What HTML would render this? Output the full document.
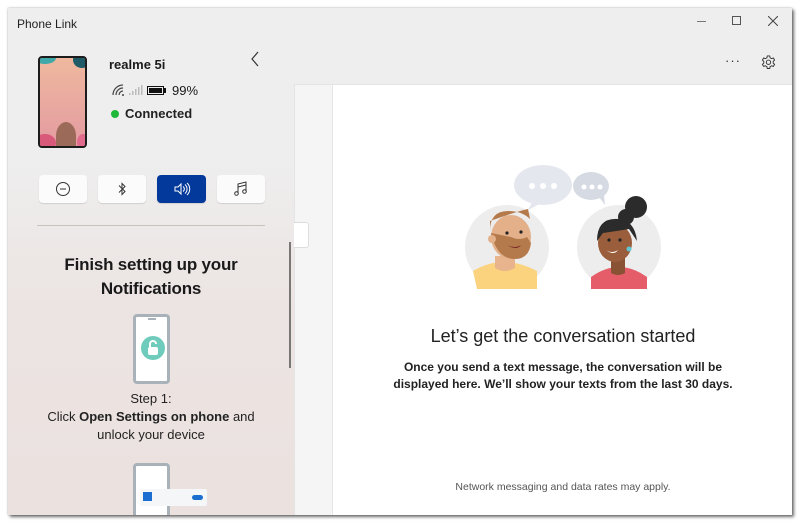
<!DOCTYPE html>
<html><head><meta charset="utf-8"><style>
*{margin:0;padding:0;box-sizing:border-box}
body{width:800px;height:524px;background:#fff;position:relative;overflow:hidden;font-family:"Liberation Sans",sans-serif;color:#1a1a1a}
.win{position:absolute;left:8px;top:8px;width:784px;height:507px;background:#eeeeee;box-shadow:2px 2px 3px rgba(0,0,0,.55),0 0 2px rgba(0,0,0,.3);overflow:hidden}
.left{position:absolute;left:0;top:0;width:286px;height:507px;background:linear-gradient(#eeeeee 0,#eeeeee 150px,#ece4e2 300px,#ebe2e0 507px)}
.mid{position:absolute;left:286px;top:76px;width:38px;height:431px;background:#f5f5f5;border-left:1px solid #e4e4e4;border-top:1px solid #e4e4e4}
.right{position:absolute;left:324px;top:76px;width:460px;height:431px;background:#fff;border-left:1px solid #e6e6e6;border-top:1px solid #e4e4e4}
.t{position:absolute;white-space:nowrap}
.btn{position:absolute;top:167px;width:48px;height:28px;background:#fbfbfb;border-radius:4px;box-shadow:0 1px 1px rgba(0,0,0,.12)}
.btn svg{position:absolute;left:16px;top:6px}
</style></head><body>
<div class="win">
<div class="left">
 <div class="t" style="left:9px;top:9px;font-size:12px;color:#222">Phone Link</div>
 <div style="position:absolute;left:30px;top:48px;width:49px;height:92px;border:2px solid #1c1c1c;border-radius:4px;overflow:hidden;background:linear-gradient(#efb89e,#e8a7a0 60%,#e39aa0)">
  <div style="position:absolute;left:-6px;top:-6px;width:22px;height:12px;border-radius:50%;background:#3fa8a8"></div>
  <div style="position:absolute;right:-6px;top:-6px;width:18px;height:16px;border-radius:50%;background:#1e5b66"></div>
  <div style="position:absolute;left:-6px;bottom:-6px;width:22px;height:18px;border-radius:50%;background:#d9597a"></div>
  <div style="position:absolute;left:16px;bottom:-4px;width:20px;height:28px;border-radius:50% 50% 10% 10%;background:#9c6a58"></div>
  <div style="position:absolute;right:-4px;bottom:-4px;width:12px;height:16px;border-radius:50%;background:#e16b8d"></div>
 </div>
 <div class="t" style="left:101px;top:49px;font-size:13px;font-weight:bold">realme 5i</div>
 <svg style="position:absolute;left:104px;top:76px" width="48" height="12" viewBox="0 0 48 12">
  <path d="M1 11a10 10 0 0 1 10-10M4 11a7 7 0 0 1 7-7M7 11a4 4 0 0 1 4-4" stroke="#444" stroke-width="1.2" fill="none"/><circle cx="11" cy="11" r="1" fill="#444"/>
  <g fill="#bbb"><rect x="17" y="9" width="1.5" height="2"/><rect x="20" y="7" width="1.5" height="4"/><rect x="23" y="5" width="1.5" height="6"/><rect x="26" y="3" width="1.5" height="8"/><rect x="29" y="1" width="1.5" height="10"/></g>
 </svg>
 <div style="position:absolute;left:139px;top:78px;width:17px;height:9px;border:1.5px solid #111;padding:1px"><div style="width:100%;height:100%;background:#111"></div></div>
 <div style="position:absolute;left:156px;top:80px;width:2px;height:5px;background:#111"></div>
 <div class="t" style="left:164px;top:75px;font-size:13px">99%</div>
 <div style="position:absolute;left:103px;top:102px;width:8px;height:8px;border-radius:50%;background:#1fb83a"></div>
 <div class="t" style="left:117px;top:98px;font-size:13px;font-weight:bold;color:#222">Connected</div>
 <svg style="position:absolute;left:242px;top:43px" width="10" height="16"><path d="M8 1L2 8l6 7" stroke="#333" stroke-width="1.2" fill="none"/></svg>
 <div class="btn" style="left:31px"><svg width="16" height="16"><circle cx="8" cy="8" r="6.5" stroke="#333" fill="none"/><path d="M5 8h6" stroke="#333"/></svg></div>
 <div class="btn" style="left:90px"><svg width="16" height="16"><path d="M5 4.5l6 6-3 3v-11l3 3-6 6" stroke="#333" fill="none"/></svg></div>
 <div class="btn" style="left:149px;background:#04399c;width:49px"><svg width="18" height="16"><path d="M2 6h3l3-3v10l-3-3H2z" stroke="#fff" fill="none"/><path d="M10 5.5a3 3 0 0 1 0 5M12 3.5a6 6 0 0 1 0 9M14 2a8 8 0 0 1 0 12" stroke="#fff" fill="none"/></svg></div>
 <div class="btn" style="left:209px"><svg width="16" height="16"><path d="M5 12V3l8-2v9" stroke="#333" fill="none"/><circle cx="3.5" cy="12.5" r="1.8" stroke="#333" fill="none"/><circle cx="11.5" cy="10.5" r="1.8" stroke="#333" fill="none"/><path d="M5 6l8-2" stroke="#333"/></svg></div>
 <div style="position:absolute;left:29px;top:217px;width:228px;height:1px;background:#c8c2c0"></div>
 <div style="position:absolute;left:281px;top:234px;width:2px;height:126px;background:#7a7676"></div>
 <div class="t" style="left:0;width:286px;text-align:center;top:245px;font-size:17px;line-height:24px;font-weight:bold;color:#1a1a1a;letter-spacing:-0.2px">Finish setting up your<br>Notifications</div>
 <div style="position:absolute;left:125px;top:306px;width:37px;height:70px;border:3px solid #a8b2b8;border-radius:4px;background:#fff">
  <div style="position:absolute;left:12px;top:1px;width:8px;height:2px;background:#a8b2b8"></div>
  <div style="position:absolute;left:5px;top:19px;width:24px;height:24px;border-radius:50%;background:#6fcbbb"></div>
  <svg style="position:absolute;left:5px;top:19px" width="24" height="24"><path d="M9 11V8a3 3 0 0 1 6 0" stroke="#fff" stroke-width="2" fill="none"/><rect x="7" y="11" width="10" height="8" rx="2" fill="#fff"/></svg>
 </div>
 <div class="t" style="left:0;width:286px;text-align:center;top:382px;font-size:13px;line-height:18px;color:#222">Step 1:<br>Click <b>Open Settings on phone</b> and<br>unlock your device</div>
 <div style="position:absolute;left:125px;top:455px;width:37px;height:60px;border:3px solid #a8b2b8;border-radius:4px;background:#fff"></div>
 <div style="position:absolute;left:132px;top:481px;width:67px;height:17px;background:#f4f6f8;border-radius:2px"></div>
 <div style="position:absolute;left:135px;top:484px;width:9px;height:9px;background:#1c6fd1"></div>
 <div style="position:absolute;left:184px;top:487px;width:11px;height:5px;border-radius:3px;background:#1c6fd1"></div>
</div>
<div class="mid"><div style="position:absolute;left:-1px;top:137px;width:15px;height:26px;background:#fff;border:1px solid #ddd;border-left:none;border-radius:0 3px 3px 0"></div></div>
<div class="right">
 <svg style="position:absolute;left:130px;top:76px" width="210" height="140" viewBox="0 0 210 140">
  <ellipse cx="80" cy="24" rx="29" ry="20" fill="#e4e8ee"/><path d="M70 40l-6 10 14-8z" fill="#e4e8ee"/>
  <ellipse cx="128" cy="25" rx="18" ry="14" fill="#d6dbe3"/><path d="M136 36l6 8-1-10z" fill="#d6dbe3"/>
  <g fill="#fff"><circle cx="69" cy="25" r="3"/><circle cx="80" cy="25" r="3"/><circle cx="91" cy="25" r="3"/><circle cx="121" cy="26" r="2.5"/><circle cx="129" cy="26" r="2.5"/><circle cx="137" cy="26" r="2.5"/></g>
  <circle cx="44" cy="86" r="42" fill="#ededee"/>
  <circle cx="156" cy="86" r="42" fill="#ededee"/>
  <path d="M10 110q30-18 64 0v18H14z" fill="#fbd37e"/>
  <path d="M32 95h20v12q-10 6-20 0z" fill="#e8b48d"/>
  <ellipse cx="48" cy="76" rx="20" ry="22" fill="#e3b08a"/>
  <path d="M28 72q6 26 24 26 14 0 16-16l-4-6q-8 4-16 0z" fill="#b47a4c"/>
  <path d="M27 70q0-20 18-20 14 0 22 8l-2-10q-10 2-38 12z" fill="#b47a4c"/>
  <circle cx="29" cy="78" r="4" fill="#e3b08a"/>
  <path d="M44 84q8 4 14 0q-4 6-14 0z" fill="#7d2a2a"/>
  <circle cx="44" cy="72" r="1.6" fill="#222"/><circle cx="58" cy="71" r="1.6" fill="#222"/>
  <path d="M128 116q28-20 56 0v12h-56z" fill="#e45d68"/>
  <path d="M148 96h14v16q-7 4-14 0z" fill="#8a5234"/>
  <ellipse cx="152" cy="82" rx="17" ry="19" fill="#9b5e3c"/>
  <path d="M134 80q0-24 22-22 16 2 18 22l-8-12q-12 2-26 4z" fill="#2b2b2b"/>
  <circle cx="173" cy="46" r="11" fill="#2b2b2b"/><circle cx="163" cy="56" r="8" fill="#2b2b2b"/>
  <circle cx="166" cy="88" r="2.5" fill="#5fc8d2"/>
  <path d="M143 89q6 4 12 0q-4 6-12 0z" fill="#fff"/>
  <circle cx="146" cy="79" r="1.6" fill="#222"/><circle cx="157" cy="79" r="1.6" fill="#222"/>
 </svg>
 <div class="t" style="left:0;width:460px;text-align:center;top:241px;font-size:18px;color:#222">Let’s get the conversation started</div>
 <div class="t" style="left:0;width:460px;text-align:center;top:274px;font-size:12px;line-height:17px;font-weight:bold;color:#222">Once you send a text message, the conversation will be<br>displayed here. We’ll show your texts from the last 30 days.</div>
 <div class="t" style="left:0;width:460px;text-align:center;top:396px;font-size:10.5px;color:#555">Network messaging and data rates may apply.</div>
</div>
<div style="position:absolute;left:689px;top:13px;width:9px;height:1px;background:#777"></div>
<div style="position:absolute;left:724px;top:8px;width:9px;height:9px;border:1px solid #555"></div>
<svg style="position:absolute;left:760px;top:8px" width="10" height="10"><path d="M0 0l10 10M10 0L0 10" stroke="#444"/></svg>
<div class="t" style="left:717px;top:45px;font-size:13px;letter-spacing:1px;color:#333">···</div>
<svg style="position:absolute;left:753px;top:47px" width="15" height="15" viewBox="0 0 16 16"><path d="M6.7 1h2.6l.4 2 1.6.9 1.9-.7 1.3 2.2-1.5 1.4v1.8l1.5 1.4-1.3 2.2-1.9-.7-1.6.9-.4 2H6.7l-.4-2-1.6-.9-1.9.7L1.5 10l1.5-1.4V6.8L1.5 5.4l1.3-2.2 1.900.7 1.6-.9z" stroke="#333" fill="none"/><circle cx="8" cy="7.7" r="2.3" stroke="#333" fill="none"/></svg>
</div>
</body></html>
